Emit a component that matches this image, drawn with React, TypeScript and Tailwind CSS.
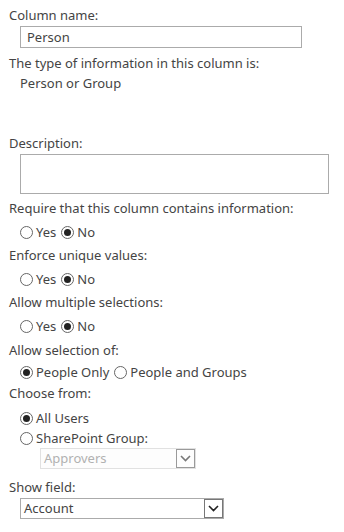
import React from "react";

const Radio = ({ checked, label }: { checked?: boolean; label: string }) => (
  <span className="flex items-center gap-[3px]">
    <span className="flex h-[13px] w-[13px] items-center justify-center rounded-full border border-[#666]">
      {checked && <span className="h-[7px] w-[7px] rounded-full bg-[#222]" />}
    </span>
    <span>{label}</span>
  </span>
);

const Chevron = ({ color }: { color: string }) => (
  <svg width="11" height="7" viewBox="0 0 11 7">
    <path d="M1 1 L5.5 5.5 L10 1" fill="none" stroke={color} strokeWidth="1.6" />
  </svg>
);

const Select = ({
  value,
  disabled,
  className,
}: {
  value: string;
  disabled?: boolean;
  className: string;
}) => (
  <div
    className={`flex h-[21px] items-stretch border ${
      disabled ? "border-[#e1e1e1] bg-[#fdfdfd] text-[#b1b1b1]" : "border-[#ababab] bg-white text-[#444]"
    } ${className}`}
  >
    <div className="flex flex-1 items-center pl-[3px] leading-none">{value}</div>
    <div
      className={`flex w-[19px] items-center justify-center border ${
        disabled ? "border-[#9a9a9a]" : "border-[#777]"
      }`}
    >
      <Chevron color={disabled ? "#777" : "#222"} />
    </div>
  </div>
);

export default function App() {
  return (
    <div
      className="h-[532px] w-[344px] overflow-hidden bg-white pl-[9px] text-[13px] leading-[18px] text-[#444]"
      style={{ fontFamily: '"Noto Sans", "Open Sans", sans-serif' }}
    >
      <div className="pt-[6px]">Column name:</div>
      <div className="ml-[11px] mt-[2px] flex h-[22px] w-[282px] items-center border border-[#ababab] px-[6px]">
        Person
      </div>
      <div className="mt-[6px]">The type of information in this column is:</div>
      <div className="ml-[11px] mt-[2px]">Person or Group</div>

      <div className="mt-[42px]">Description:</div>
      <div className="ml-[11px] mt-[2px] h-[40px] w-[309px] border border-[#ababab]" />

      <div className="mt-[5px]">Require that this column contains information:</div>
      <div className="ml-[11px] mt-[6px] flex gap-[5px]">
        <Radio label="Yes" />
        <Radio checked label="No" />
      </div>

      <div className="mt-[5px]">Enforce unique values:</div>
      <div className="ml-[11px] mt-[6px] flex gap-[5px]">
        <Radio label="Yes" />
        <Radio checked label="No" />
      </div>

      <div className="mt-[5px]">Allow multiple selections:</div>
      <div className="ml-[11px] mt-[6px] flex gap-[5px]">
        <Radio label="Yes" />
        <Radio checked label="No" />
      </div>

      <div className="mt-[6px]">Allow selection of:</div>
      <div className="ml-[11px] mt-[4px] flex gap-[5px]">
        <Radio checked label="People Only" />
        <Radio label="People and Groups" />
      </div>

      <div className="mt-[3px]">Choose from:</div>
      <div className="ml-[11px] mt-[7px] flex">
        <Radio checked label="All Users" />
      </div>
      <div className="ml-[11px] mt-[2px] flex">
        <Radio label="SharePoint Group:" />
      </div>
      <Select value="Approvers" disabled className="ml-[31px] mt-[1px] w-[156px]" />

      <div className="mt-[9px]">Show field:</div>
      <Select value="Account" className="ml-[11px] mt-[2px] w-[204px]" />
    </div>
  );
}
